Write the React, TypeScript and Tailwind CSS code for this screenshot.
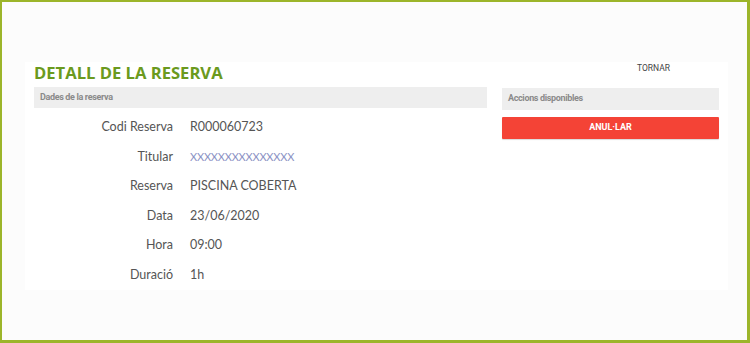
const rows: { label: string; value: string; link?: boolean }[] = [
  { label: 'Codi Reserva', value: 'R000060723' },
  { label: 'Titular', value: 'XXXXXXXXXXXXXXX', link: true },
  { label: 'Reserva', value: 'PISCINA COBERTA' },
  { label: 'Data', value: '23/06/2020' },
  { label: 'Hora', value: '09:00' },
  { label: 'Duració', value: '1h' },
];

export default function App() {
  return (
    <div className="w-[750px] h-[343px] border-t-2 border-l-2 border-r-[3px] border-b-[3px] border-[#9cb52a] bg-[#fcfcfc] pl-[23px] pt-[60px]">
      <div className="w-[703px] h-[228px] bg-white px-[9px] flex gap-[15px]">
        <div className="w-[453px] flex flex-col">
          <h1 className="h-[26px] text-[16.6px] font-bold text-[#6b9a1e] font-['Open_Sans',sans-serif] leading-[22px]">
            DETALL DE LA RESERVA
          </h1>
          <div className="h-[22px] bg-[#eeeeee] flex items-center px-[6px] text-[9px] font-bold text-[#8a8a8a] font-['Roboto',sans-serif] tracking-[-0.35px]">
            Dades de la reserva
          </div>
          <div className="flex flex-col pt-[5px] font-['Lato',sans-serif] text-[12.5px] text-[#555]">
            {rows.map((r) => (
              <div key={r.label} className="flex items-center h-[29.5px]">
                <span className="w-[139px] text-right">{r.label}</span>
                <span className={`ml-[17px] ${r.link ? 'text-[#8b92c4] text-[11px] tracking-[-0.2px]' : ''}`}>{r.value}</span>
              </div>
            ))}
          </div>
        </div>
        <div className="w-[217px] flex flex-col">
          <div className="h-[26px] flex justify-end items-start pr-[49px] text-[8.5px] text-[#444] font-['Roboto',sans-serif]">
            TORNAR
          </div>
          <div className="h-[22px] bg-[#eeeeee] flex items-center px-[6px] text-[9px] font-bold text-[#8a8a8a] font-['Roboto',sans-serif] tracking-[-0.35px]">
            Accions disponibles
          </div>
          <button className="mt-[7px] h-[22px] bg-[#f44336] text-white text-[9px] font-bold font-['Roboto',sans-serif] rounded-[1px] shadow-[0_1px_1px_rgba(0,0,0,0.15)]">
            ANUL·LAR
          </button>
        </div>
      </div>
    </div>
  );
}
